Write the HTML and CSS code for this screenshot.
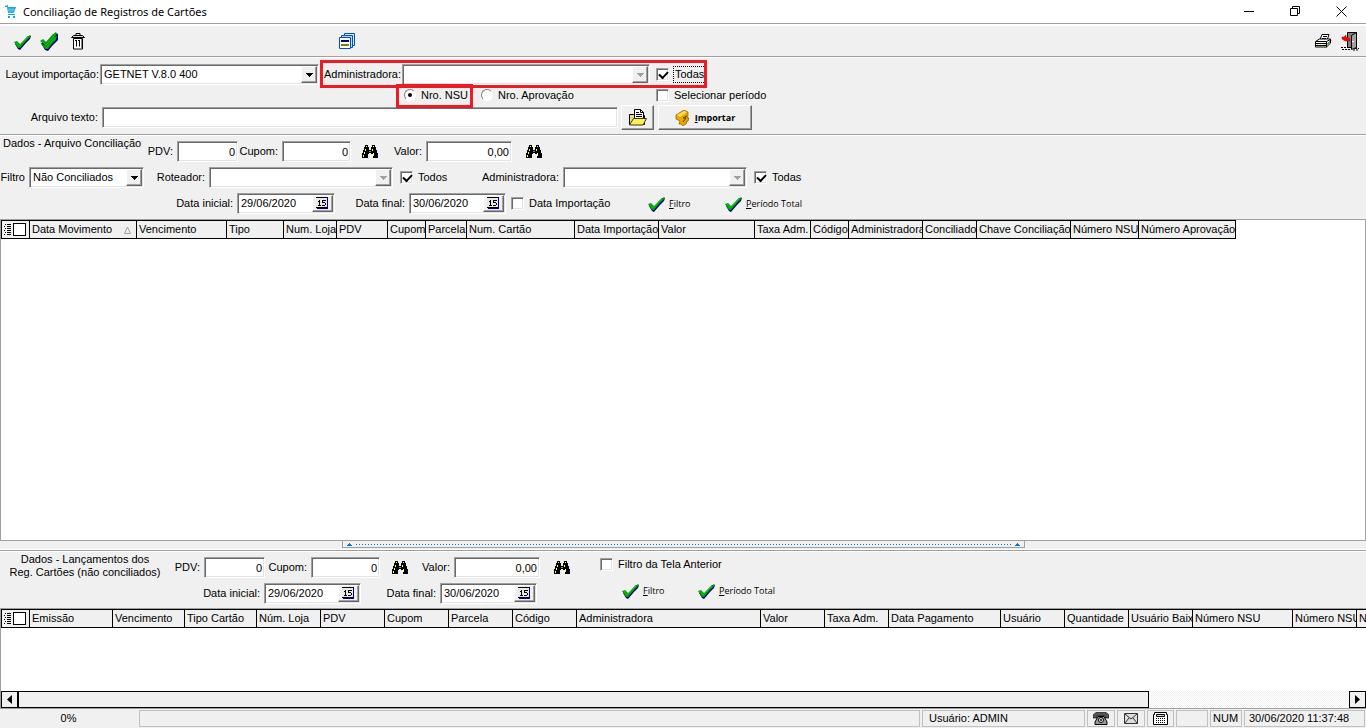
FILE: index.html
```html
<!DOCTYPE html>
<html lang="pt-BR">
<head>
<meta charset="utf-8">
<title>Conciliação de Registros de Cartões</title>
<link rel="stylesheet" href="styles.css">
</head>
<body>
<svg class="sprite" aria-hidden="true">
  <symbol id="check" viewBox="0 0 17 16">
    <path d="M1 10l2-1 3 2L14 2l3 0-1 3-4 4-6 7-2-1z" fill="#000080"/>
    <path d="M0 8l3-1 3 3 6-6 4-3 1 1-5 5-6 7-2 0z" fill="#00a000"/>
    <path d="M2 8l3 4 9-9" fill="none" stroke="#12c412"/>
  </symbol>
  <symbol id="binoculars" viewBox="0 0 16 14">
    <path d="M3 0h3v2h1v3h2V2h1V0h3v2h1v3h1v3h1v5h-5V9H9V8H7v1H6v4H0V8h1V5h1V2h1z" fill="#000"/>
    <path d="M4 1h1v1H4zM11 1h1v1h-1zM3 4h1v2H3zM2 7h1v2H2zM1 10h1v2H1zM10 4h1v2h-1zM11 8h1v3h-1z" fill="#ffff40"/>
    <path d="M7 6h2v1H7z" fill="#888"/>
  </symbol>
  <symbol id="arrow" viewBox="0 0 7 4"><path d="M0 0h7v1H6v1H5v1H4v1H3V3H2V2H1V1H0z" fill="currentColor"/></symbol>
  <symbol id="calendar" viewBox="0 0 13 13">
    <path d="M0 0h12v12H0z" fill="#e8e8e8"/><path d="M0 0h12v1H0zM0 10h12v1H0z" fill="#000"/>
    <path d="M11 1h1v11H1v-1h10z" fill="#000080"/>
    <path d="M2 4h1V3h1v5h1v1H2V8h1V5H2zM6 3h4v1H7v1h2v1h1v2H9v1H6V8h3V6H6z" fill="#000"/>
  </symbol>
  <symbol id="listmark" viewBox="0 0 7 11"><path d="M1 0h1v1H1zM0 2h1v1H0zM1 4h1v1H1zM0 6h1v1H0zM1 8h1v1H1zM0 10h1v1H0zM3 0h4v1H3zM3 2h4v1H3zM3 4h4v1H3zM3 6h4v1H3zM3 8h4v1H3zM3 10h4v1H3z" fill="#000"/></symbol>
</svg>

<header class="titlebar">
  <svg class="app-icon" width="12" height="14" viewBox="0 0 12 14"><path d="M0 1l3-1v2h8L9 8H3L2 2H0zM3 9h7v1H3z" fill="#1ba4d8"/><path d="M4 3v5M6 3v5M8 3v5M3 5h7" stroke="#8fd8f2" stroke-width=".6"/><path d="M3 11h2v2H3zM8 11h2v2H8z" fill="#1ba4d8"/></svg>
  <h1>Conciliação de Registros de Cartões</h1>
  <div class="window-buttons">
    <button aria-label="Minimizar"><svg width="11" height="11"><path d="M0 5h10v1H0z"/></svg></button>
    <button aria-label="Restaurar"><svg width="11" height="11"><path d="M.5 2.500h7v7h-7zM2.500 2.500v-2h7v7h-2" fill="none" stroke="#000"/></svg></button>
    <button aria-label="Fechar"><svg width="11" height="11"><path d="M.5.5l10 10M10.500.5l-10 10" fill="none" stroke="#000"/></svg></button>
  </div>
</header>

<div class="toolbar">
  <button aria-label="Confirmar"><svg width="17" height="16"><use href="#check"/></svg></button>
  <button aria-label="Confirmar todos"><svg width="18" height="19" viewBox="0 0 18 19"><path d="M1 11l3-1 3 2L15 1l3 1v4l0 2-6 6-4 5-3-1z" fill="#000080"/><path d="M0 9l3-2 3 3 6-7 4-3 1 2-5 6-5 5-2 0z" fill="#00a000"/><path d="M1 12l5 1 8-8 3-1-1 4-4 4-4 5-3 0z" fill="#109010"/><path d="M2 9l4 4 9-10M6 16l10-11" fill="none" stroke="#18c018"/></svg></button>
  <button aria-label="Excluir"><svg width="14" height="17" viewBox="0 0 14 17"><path d="M2.500 5.500h9v10.500h-9z" fill="#fff" stroke="#000"/><path d="M.5 4.500L2.500 2.500h9l2 2z" fill="#ddd" stroke="#000"/><path d="M5 2V.5h4V2" fill="none" stroke="#000"/><path d="M5.500 7.500v6M8.500 7.500v6M4 7.500h2M7 7.500h2" fill="none" stroke="#000"/><path d="M10.500 6v9" stroke="#888"/></svg></button>
  <button class="tool-windows" aria-label="Janelas"><svg width="17" height="17" viewBox="0 0 17 17"><path d="M5.500.5h10v12h-10z" fill="#d8ecff" stroke="#0050c0"/><path d="M2.500 2.500h11v12h-11z" fill="#b8dcff" stroke="#0050c0"/><path d="M.5 4.500h11v11H.5z" fill="#fff" stroke="#0050c0"/><path d="M2 7h8v2H2z" fill="#000080"/><path d="M2 11h8v2H2z" fill="#808000"/></svg></button>
  <span class="spacer"></span>
  <button aria-label="Imprimir"><svg width="17" height="15" viewBox="0 0 17 15"><path d="M5 5.500l2-5h7l-2 6z" fill="#fff" stroke="#000"/><path d="M8 2.500h4M7 4.500h4" stroke="#000"/><path d="M.5 7.500l4-2.500h8l3 0v4l-4 4H.5z" fill="#fff" stroke="#000"/><path d="M1 7.500h10.500l4-2M11.500 7.500v6M1 9.500h10M1 11.500h10M12 10.500l4-4" stroke="#000" fill="none"/><path d="M8 10h3v1H8z" fill="#ff0"/></svg></button>
  <button aria-label="Sair"><svg width="18" height="19" viewBox="0 0 18 19"><path d="M6.500 .5h9v15h-9z" fill="#808080" stroke="#000"/><path d="M10.500 3.500l5-3v15l-5 2z" fill="#a0a0a0" stroke="#000"/><path d="M11 9h2v1h-2z" fill="#fff"/><path d="M0 15.500h9M1 17.500h9M14 16.500h4M12 18h5" stroke="#000" stroke-dasharray="2 1"/><path d="M1 5h2l2-2v2l4 2v2H4L1 7z" fill="#f00" stroke="#800000" stroke-width=".4"/></svg></button>
</div>

<main class="content">
<form class="panel import">
  <div class="row import-source">
    <label for="layout">Layout importação:</label>
    <span class="combo"><select id="layout"><option>GETNET V.8.0 400</option></select><i><svg width="7" height="4"><use href="#arrow"/></svg></i></span>
    <div class="group mark mark-admin">
      <label for="admin">Administradora:</label>
      <span class="combo"><select id="admin" disabled><option></option></select><i><svg width="7" height="4"><use href="#arrow"/></svg></i></span>
      <label class="option focused"><input type="checkbox" checked><span>Todas</span></label>
    </div>
  </div>
  <div class="row import-key">
    <label class="option mark mark-nsu"><input type="radio" name="key" checked><span>Nro. NSU</span></label>
    <label class="option"><input type="radio" name="key"><span>Nro. Aprovação</span></label>
    <label class="option"><input type="checkbox"><span>Selecionar período</span></label>
  </div>
  <div class="row import-file">
    <label for="file">Arquivo texto:</label>
    <input class="text" id="file" type="text">
    <button type="button" class="raised" aria-label="Abrir arquivo"><svg width="18" height="17" viewBox="0 0 18 17"><path d="M.5 15.500v-10h4l1 1h10v9z" fill="#e8e070" stroke="#000"/><path d="M5.500 10V.5h6l3 3V10z" fill="#fff" stroke="#000"/><path d="M11.500.5v3h3M7 3.500h3M7 5.500h6M7 7.500h6" fill="none" stroke="#000"/><path d="M.5 16l4-6.500h13L14 16z" fill="#fff04a" stroke="#333"/></svg></button>
    <button type="button" class="raised import-button"><svg width="15" height="16" viewBox="0 0 15 16"><path d="M1 5l8-5 4 2v4l-1 2h2l-1 3-2 1 1 1-4 3-2-2H4l1-3-4-2z" fill="#e8a800" stroke="#8a5c00" stroke-width=".7"/><path d="M2 5l7-4 3 1-7 5z" fill="#ffe050"/><path d="M12 6L8 8h3l-3 4" fill="none" stroke="#5c3b00"/></svg><b><u>I</u>mportar</b></button>
  </div>
</form>

<form class="panel filters">
  <div class="row filter-values">
    <h2>Dados - Arquivo Conciliação</h2>
    <label for="pdv1">PDV:</label><input class="text number" id="pdv1" type="text" value="0">
    <label for="cupom1">Cupom:</label><input class="text number" id="cupom1" type="text" value="0">
    <button type="button" class="flat" aria-label="Buscar cupom"><svg width="16" height="14"><use href="#binoculars"/></svg></button>
    <label for="valor1">Valor:</label><input class="text number" id="valor1" type="text" value="0,00">
    <button type="button" class="flat" aria-label="Buscar valor"><svg width="16" height="14"><use href="#binoculars"/></svg></button>
  </div>
  <div class="row filter-lists">
    <label for="filtro">Filtro</label>
    <span class="combo"><select id="filtro"><option>Não Conciliados</option></select><i><svg width="7" height="4"><use href="#arrow"/></svg></i></span>
    <label for="roteador">Roteador:</label>
    <span class="combo"><select id="roteador" disabled><option></option></select><i><svg width="7" height="4"><use href="#arrow"/></svg></i></span>
    <label class="option"><input type="checkbox" checked><span>Todos</span></label>
    <label for="admin2">Administradora:</label>
    <span class="combo"><select id="admin2" disabled><option></option></select><i><svg width="7" height="4"><use href="#arrow"/></svg></i></span>
    <label class="option"><input type="checkbox" checked><span>Todas</span></label>
  </div>
  <div class="row filter-dates">
    <label for="start1">Data inicial:</label>
    <span class="date"><input id="start1" type="text" value="29/06/2020"><button type="button" aria-label="Calendário"><svg width="13" height="13"><use href="#calendar"/></svg></button></span>
    <label for="end1">Data final:</label>
    <span class="date"><input id="end1" type="text" value="30/06/2020"><button type="button" aria-label="Calendário"><svg width="13" height="13"><use href="#calendar"/></svg></button></span>
    <label class="option"><input type="checkbox"><span>Data Importação</span></label>
    <button type="button" class="action"><svg width="17" height="16"><use href="#check"/></svg><span><u>F</u>iltro</span></button>
    <button type="button" class="action"><svg width="17" height="16"><use href="#check"/></svg><span><u>P</u>eríodo Total</span></button>
  </div>
</form>

<section class="sheet sheet-main">
  <table class="grid">
    <colgroup><col class="w29"><col class="w107"><col class="w90"><col class="w57"><col class="w53"><col class="w51"><col class="w38"><col class="w41"><col class="w108"><col class="w84"><col class="w96"><col class="w56"><col class="w38"><col class="w74"><col class="w54"><col class="w94"><col class="w68"><col class="w97"></colgroup>
    <thead><tr>
      <th><div class="pick"><svg width="7" height="11"><use href="#listmark"/></svg><input type="checkbox" aria-label="Selecionar todos"></div></th>
      <th><div class="sorted">Data Movimento <svg width="7" height="8"><path d="M3.500 1L6.500 7.500H.5z" fill="none" stroke="#a0a0a0"/></svg></div></th><th>Vencimento</th><th>Tipo</th><th>Num. Loja</th><th>PDV</th><th>Cupom</th><th>Parcela</th><th>Num. Cartão</th><th>Data Importação</th><th>Valor</th><th>Taxa Adm.</th><th>Código</th><th>Administradora</th><th>Conciliado</th><th>Chave Conciliação</th><th>Número NSU</th><th>Número Aprovação</th>
    </tr></thead>
  </table>
</section>

<div class="splitter"><div class="handle"><svg width="5" height="3"><path d="M2 0h1v1h1v1h1v1H0V2h1V1h1z"/></svg><span></span><svg width="5" height="3"><path d="M2 0h1v1h1v1h1v1H0V2h1V1h1z"/></svg></div></div>

<form class="panel entries">
  <h2>Dados - Lançamentos dos<br>Reg. Cartões (não conciliados)</h2>
  <div class="rows">
    <div class="row entry-values">
      <label for="pdv2">PDV:</label><input class="text number" id="pdv2" type="text" value="0">
      <label for="cupom2">Cupom:</label><input class="text number" id="cupom2" type="text" value="0">
      <button type="button" class="flat" aria-label="Buscar cupom"><svg width="16" height="14"><use href="#binoculars"/></svg></button>
      <label for="valor2">Valor:</label><input class="text number" id="valor2" type="text" value="0,00">
      <button type="button" class="flat" aria-label="Buscar valor"><svg width="16" height="14"><use href="#binoculars"/></svg></button>
      <label class="option"><input type="checkbox"><span>Filtro da Tela Anterior</span></label>
    </div>
    <div class="row entry-dates">
      <label for="start2">Data inicial:</label>
      <span class="date"><input id="start2" type="text" value="29/06/2020"><button type="button" aria-label="Calendário"><svg width="13" height="13"><use href="#calendar"/></svg></button></span>
      <label for="end2">Data final:</label>
      <span class="date"><input id="end2" type="text" value="30/06/2020"><button type="button" aria-label="Calendário"><svg width="13" height="13"><use href="#calendar"/></svg></button></span>
      <button type="button" class="action"><svg width="17" height="16"><use href="#check"/></svg><span><u>F</u>iltro</span></button>
      <button type="button" class="action"><svg width="17" height="16"><use href="#check"/></svg><span><u>P</u>eríodo Total</span></button>
    </div>
  </div>
</form>

<section class="sheet sheet-entries">
  <div class="viewport">
  <table class="grid">
    <colgroup><col class="w29"><col class="w83"><col class="w72"><col class="w72"><col class="w64"><col class="w64"><col class="w64"><col class="w64"><col class="w64"><col class="w184"><col class="w64"><col class="w64"><col class="w112"><col class="w64"><col class="w64"><col class="w64"><col class="w100"><col class="w64"><col class="w64"></colgroup>
    <thead><tr>
      <th><div class="pick"><svg width="7" height="11"><use href="#listmark"/></svg><input type="checkbox" aria-label="Selecionar todos"></div></th>
      <th>Emissão</th><th>Vencimento</th><th>Tipo Cartão</th><th>Núm. Loja</th><th>PDV</th><th>Cupom</th><th>Parcela</th><th>Código</th><th>Administradora</th><th>Valor</th><th>Taxa Adm.</th><th>Data Pagamento</th><th>Usuário</th><th>Quantidade</th><th>Usuário Baixa</th><th>Número NSU</th><th>Número NSU</th><th>Número</th>
    </tr></thead>
  </table>
  </div>
  <div class="scrollbar">
    <button aria-label="Rolar para a esquerda"><svg width="5" height="9"><path d="M5 0v9L0 4.500z"/></svg></button>
    <div class="track"><div class="thumb"></div></div>
    <button aria-label="Rolar para a direita"><svg width="5" height="9"><path d="M0 0v9l5-4.500z"/></svg></button>
  </div>
</section>
</main>

<footer class="status">
  <span class="percent">0%</span>
  <span class="cell"></span>
  <span class="cell">Usuário: ADMIN</span>
  <span class="cell icon"><svg width="16" height="13" viewBox="0 0 16 13"><path d="M0 3l3-2.500h10L16 3v3h-4V4H4v2H0z" fill="#555" stroke="#000" stroke-width=".6"/><path d="M5 4.500h6L14 10v2.500H2V10z" fill="#999" stroke="#000"/><circle cx="8" cy="8" r="2.500" fill="#eee" stroke="#000"/><circle cx="8" cy="8" r="1"/></svg></span>
  <span class="cell icon"><svg width="14" height="11" viewBox="0 0 14 11"><path d="M.5.5h13v10H.5z" fill="#ddd" stroke="#333"/><path d="M1 1l6 5 6-5M1 10l4-5M13 10L9 5" fill="none" stroke="#333"/></svg></span>
  <span class="cell icon"><svg width="15" height="13" viewBox="0 0 15 13"><path d="M1.500.5h12v2h1v10H.5v-10h1z" fill="#fff" stroke="#000"/><path d="M3.500 2.500h8v2h-8z" fill="#ddd" stroke="#000"/><path d="M3 6.500h9M3 8.500h9M3 10.500h9" stroke="#000" stroke-dasharray="1 1"/></svg></span>
  <span class="cell"></span>
  <span class="cell">NUM</span>
  <span class="cell">30/06/2020 11:37:48</span>
</footer>
</body>
</html>
```
FILE: styles.css
```css
* { box-sizing: border-box; }
body {
  margin: 0;
  min-height: 100vh;
  display: flex;
  flex-direction: column;
  background: #f0f0f0;
  color: #000;
  font: 11px/13px "Liberation Sans", Arial, sans-serif;
  overflow-x: hidden;
}
input, select, button { font: inherit; color: inherit; margin: 0; padding: 0; border-radius: 0; }
button { border: 0; background: none; display: flex; align-items: center; justify-content: center; }
h1, h2 { margin: 0; font-size: inherit; font-weight: normal; }
svg { display: block; flex: none; }
label { white-space: nowrap; text-align: right; padding-right: 4px; }
.sprite { position: absolute; width: 0; height: 0; }

.titlebar { display: flex; align-items: center; height: 23px; padding: 0 2px 0 5px; background: #fff; }
.titlebar h1 { flex: 1; margin-left: 6px; font: 11px/16px "Noto Sans", sans-serif; }
.window-buttons { display: flex; }
.window-buttons button { width: 46px; height: 20px; }

.toolbar {
  display: flex; align-items: center; gap: 9px;
  height: 33px; padding: 3px 7px 0 14px;
  border-top: 1px solid #a0a0a0; box-shadow: inset 0 2px #fff;
}
.toolbar button:nth-child(3) { margin-left: 4px; }
.toolbar .tool-windows { margin-left: 245px; }
.spacer { flex: 1; }

.content { flex: 1; display: flex; flex-direction: column; }
.panel { border-top: 1px solid #a0a0a0; box-shadow: inset 0 1px #fff; }
.row { display: grid; align-items: center; height: 21px; }
.group { display: grid; align-items: center; }

.text, .combo, .date {
  height: 21px; width: 100%; background: #fff;
  border: 1px solid; border-color: #a0a0a0 #fff #fff #a0a0a0;
  box-shadow: inset 1px 1px #696969, inset -1px -1px #e3e3e3;
}
.text { padding: 0 2px; outline: none; }
.number { text-align: right; }
.combo { position: relative; display: block; padding: 1px; }
.combo select {
  appearance: none; display: block; width: 100%; height: 17px; padding: 0 18px 0 2px;
  border: 0; background: #fff; outline: none; opacity: 1;
}
.combo i, .date button {
  background: #f0f0f0; border: 1px solid; border-color: #fff #696969 #696969 #fff;
  box-shadow: inset -1px -1px #a0a0a0;
}
.combo i {
  position: absolute; top: 1px; right: 1px; bottom: 1px; width: 16px;
  display: flex; align-items: center; justify-content: center; pointer-events: none;
}
.combo select:disabled + i { color: #a0a0a0; }
.date { display: flex; padding: 1px; }
.date input { flex: 1; min-width: 0; border: 0; padding: 0 2px; background: none; outline: none; }
.date button { width: 21px; height: 17px; }

.option { display: flex; align-items: center; gap: 5px; padding: 0; }
.option input { appearance: none; flex: none; width: 13px; height: 13px; background: #fff; }
input[type="checkbox"] {
  border: 1px solid; border-color: #a0a0a0 #fff #fff #a0a0a0;
  box-shadow: inset 1px 1px #696969, inset -1px -1px #e3e3e3;
}
.option input[type="checkbox"]:checked::before {
  content: ""; display: block; width: 7px; height: 4px; margin: 2px 0 0 2px;
  border: solid #000; border-width: 0 0 2px 2px; transform: rotate(-47deg);
}
.option input[type="radio"] {
  width: 12px; height: 12px; border-radius: 50%;
  border: 1px solid; border-color: #808080 #fff #fff #808080;
  display: flex; align-items: center; justify-content: center;
}
.option input[type="radio"]:checked::before { content: ""; width: 4px; height: 4px; border-radius: 50%; background: #000; }
.focused span { outline: 1px dotted #000; padding: 1px; }

.mark { position: relative; }
.mark::after { content: ""; position: absolute; border: 3px solid #ed1c24; pointer-events: none; }
.mark-admin::after { inset: -4px -2px -3px 0; }
.mark-nsu::after { inset: -5px 0 -6px -8px; }

.raised {
  border: 1px solid; border-color: #fff #696969 #696969 #fff;
  box-shadow: inset -1px -1px #a0a0a0;
}
.action { gap: 4px; justify-content: flex-start; font: 9px/12px "Open Sans", sans-serif; white-space: nowrap; }

.import { padding: 7px 0 4px; }
.import-source { grid-template-columns: 100px 219px 1px 385px; }
.import-source label { padding-right: 1px; }
.import-source .group { grid-column: 4; grid-template-columns: 82px 248px 6px 49px; }
.import-source .group .option { grid-column: 4; }
.import-key { grid-template-columns: 69px 8px 175px 120px; height: 20px; padding-left: 404px; }
.import-key .option:nth-child(2) { grid-column: 3; }
.import-file { grid-template-columns: 102px 516px 36px 101px; height: 25px; }
.import-file .raised { height: 25px; }
.import-file .raised:nth-of-type(1) { margin-left: 3px; }
.import-file .raised:nth-of-type(2) { margin-left: 4px; margin-right: 3px; }
.import-button { gap: 5px; font: 9px/13px "Open Sans", sans-serif; }

.filters { display: grid; gap: 5px; padding: 6px 0 5px; }
.filters h2 { padding-left: 3px; align-self: start; margin-top: -4px; white-space: nowrap; }
.filter-values { grid-template-columns: 138px 39px 61px 44px 69px 38px 37px 86px 43px; }
.filter-lists { grid-template-columns: 29px 115px 65px 184px 7px 80px 83px 184px 7px 60px; }
.filter-lists .option:nth-of-type(3) { grid-column: 6; }
.filter-lists .option:nth-of-type(5) { grid-column: 10; }
.filter-dates { grid-template-columns: 237px 98px 74px 97px 142px 77px 90px; }
.filter-dates .option { padding-left: 5px; }

.sheet { display: flex; flex-direction: column; background: #fff; border: 1px solid #a0a0a0; overflow: hidden; }
.sheet-main { flex: 1; min-height: 60px; }
.sheet-entries { height: 101px; border-right: 0; }
.viewport { flex: 1; overflow: hidden; }
.grid { table-layout: fixed; width: 0; border-spacing: 0; }
.grid th {
  height: 19px; padding: 0 0 0 2px; overflow: hidden; white-space: nowrap;
  text-align: left; font-weight: normal; background: #f0f0f0;
  border: solid #000; border-width: 1px 1px 1px 0;
}
.grid th:first-child { border-left-width: 1px; padding-left: 2px; }
.pick { display: flex; align-items: center; gap: 2px; }
.pick input { appearance: none; width: 13px; height: 13px; background: #fff; border: 1px solid #000; box-shadow: none; }
.sorted { display: flex; align-items: center; justify-content: space-between; padding-right: 5px; }
.w29 { width: 29px; } .w38 { width: 38px; } .w41 { width: 41px; } .w51 { width: 51px; }
.w53 { width: 53px; } .w54 { width: 54px; } .w56 { width: 56px; } .w57 { width: 57px; }
.w64 { width: 64px; } .w68 { width: 68px; } .w72 { width: 72px; } .w74 { width: 74px; }
.w83 { width: 83px; } .w84 { width: 84px; } .w90 { width: 90px; } .w94 { width: 94px; }
.w96 { width: 96px; } .w97 { width: 97px; } .w100 { width: 100px; } .w107 { width: 107px; }
.w108 { width: 108px; } .w112 { width: 112px; } .w184 { width: 184px; }

.splitter { height: 9px; display: flex; justify-content: center; align-items: flex-start; border-bottom: 1px solid #fff; }
.handle {
  display: flex; align-items: center; gap: 4px; width: 50%; height: 7px; padding: 0 4px;
  border: 1px solid #a0a0a0; border-top: 0;
}
.handle svg { fill: #0078d7; }
.handle span { flex: 1; height: 1px; background: repeating-linear-gradient(90deg, #0078d7 0 1px, transparent 1px 3px); }

.entries { display: flex; padding-bottom: 4px; }
.entries h2 { width: 172px; padding: 2px 6px 0 4px; text-align: center; white-space: nowrap; }
.rows { display: grid; gap: 5px; padding-top: 6px; }
.entry-values { grid-template-columns: 32px 61px 46px 69px 39px 35px 86px 43px 17px 130px; }
.entry-values .option { grid-column: 10; align-self: start; padding-top: 1px; }
.entry-dates { grid-template-columns: 92px 97px 79px 97px 85px 76px 90px; }
.entry-dates .action { align-self: start; }
.entry-dates .action:nth-of-type(1) { grid-column: 6; }

.scrollbar { display: flex; height: 17px; }
.scrollbar button { width: 17px; height: 17px; background: #f0f0f0; border: 1px solid #000; }
.track { flex: 1; background: repeating-conic-gradient(#f0f0f0 0 25%, #fff 0 50%) 0 0 / 2px 2px; }
.thumb { width: 85%; height: 17px; background: #f0f0f0; border: 1px solid #000; }

.status {
  display: grid; gap: 2px; height: 19px; padding: 1px 1px 1px 0;
  grid-template-columns: 137px 1fr 163px 28px 28px 27px 32px 32px 121px;
}
.status span { display: flex; align-items: center; }
.status .percent { justify-content: center; }
.cell { padding: 0 3px 0 6px; border: 1px solid #c0c0c0; white-space: nowrap; }
.cell:nth-child(8) { padding: 0 2px; }
.cell:nth-child(9) { padding: 0 4px; }
.status .icon { justify-content: center; padding: 0; }
```
